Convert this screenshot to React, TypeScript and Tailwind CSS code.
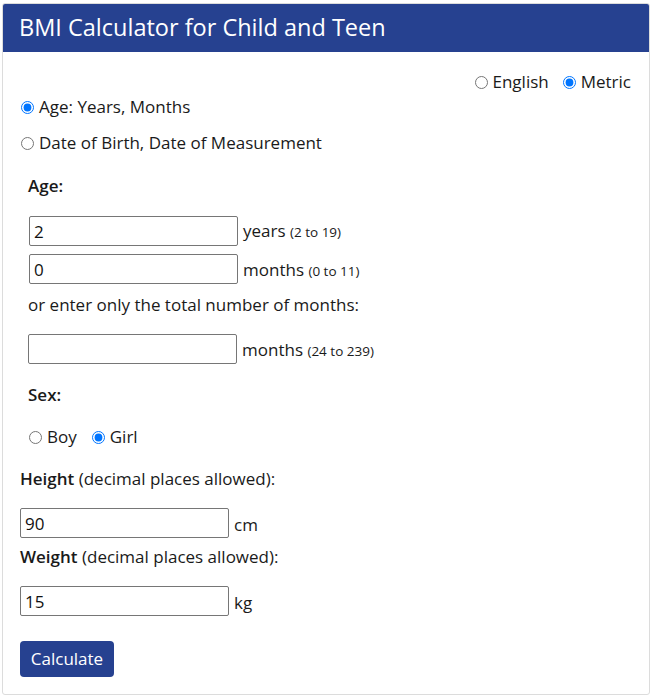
import React from "react";

const font = { fontFamily: '"Open Sans", "Noto Sans", sans-serif' };

function Radio({ checked, label, name }: { checked?: boolean; label: string; name: string }) {
  return (
    <label className="flex items-center gap-[5px]">
      <input type="radio" name={name} defaultChecked={checked} className="m-0 w-[13px] h-[13px]" />
      <span>{label}</span>
    </label>
  );
}

function Field({ value }: { value: string }) {
  return (
    <input
      type="text"
      defaultValue={value}
      className="w-[209px] h-[30px] border border-[#767676] rounded-[2px] px-[4px] text-[17px] text-[#111] outline-none"
    />
  );
}

export default function App() {
  return (
    <div className="bg-white min-h-[700px] pt-[3px] pl-[2px] text-[17px] text-[#1a1a1a]" style={font}>
      <div className="w-[648px] border border-[#dcdcdc] rounded-[3px] overflow-hidden">
        <div className="bg-[#264190] h-[48px] flex items-center pl-[16px]">
          <h1 className="text-white text-[23.5px] leading-none">BMI Calculator for Child and Teen</h1>
        </div>
        <div className="pt-[18px] pb-[17px] pl-[17px] pr-[18px] leading-[24px]">
          <div className="flex justify-end gap-[14px]">
            <Radio name="units" label="English" />
            <Radio name="units" label="Metric" checked />
          </div>
          <div className="pl-[1px] mt-[1px]">
            <Radio name="mode" label="Age: Years, Months" checked />
          </div>
          <div className="pl-[1px] mt-[12px]">
            <Radio name="mode" label="Date of Birth, Date of Measurement" />
          </div>
          <div className="pl-[8px]">
            <div className="mt-[19px] font-semibold">Age:</div>
            <div className="mt-[18px] flex items-center gap-[5px] pl-[1px]">
              <Field value="2" />
              <span>
                years <span className="text-[13.5px]">(2 to 19)</span>
              </span>
            </div>
            <div className="mt-[8px] flex items-center gap-[5px] pl-[1px]">
              <Field value="0" />
              <span className="mt-[2px]">
                months <span className="text-[13.5px]">(0 to 11)</span>
              </span>
            </div>
            <div className="mt-[9px]">or enter only the total number of months:</div>
            <div className="mt-[17px] flex items-center gap-[5px]">
              <Field value="" />
              <span className="mt-[2px]">
                months <span className="text-[13.5px]">(24 to 239)</span>
              </span>
            </div>
            <div className="mt-[19px] font-semibold">Sex:</div>
            <div className="mt-[18px] flex items-center gap-[15px] pl-[1px]">
              <Radio name="sex" label="Boy" />
              <Radio name="sex" label="Girl" checked />
            </div>
          </div>
          <div className="mt-[18px]">
            <span className="font-semibold">Height</span> (decimal places allowed):
          </div>
          <div className="mt-[17px] flex items-center gap-[5px]">
            <Field value="90" />
            <span className="mt-[4px]">cm</span>
          </div>
          <div className="mt-[7px]">
            <span className="font-semibold">Weight</span> (decimal places allowed):
          </div>
          <div className="mt-[17px] flex items-center gap-[5px]">
            <Field value="15" />
            <span className="mt-[4px]">kg</span>
          </div>
          <button className="mt-[25px] h-[36px] w-[94px] bg-[#264190] text-white rounded-[4px] text-[17px]">
            Calculate
          </button>
        </div>
      </div>
    </div>
  );
}
